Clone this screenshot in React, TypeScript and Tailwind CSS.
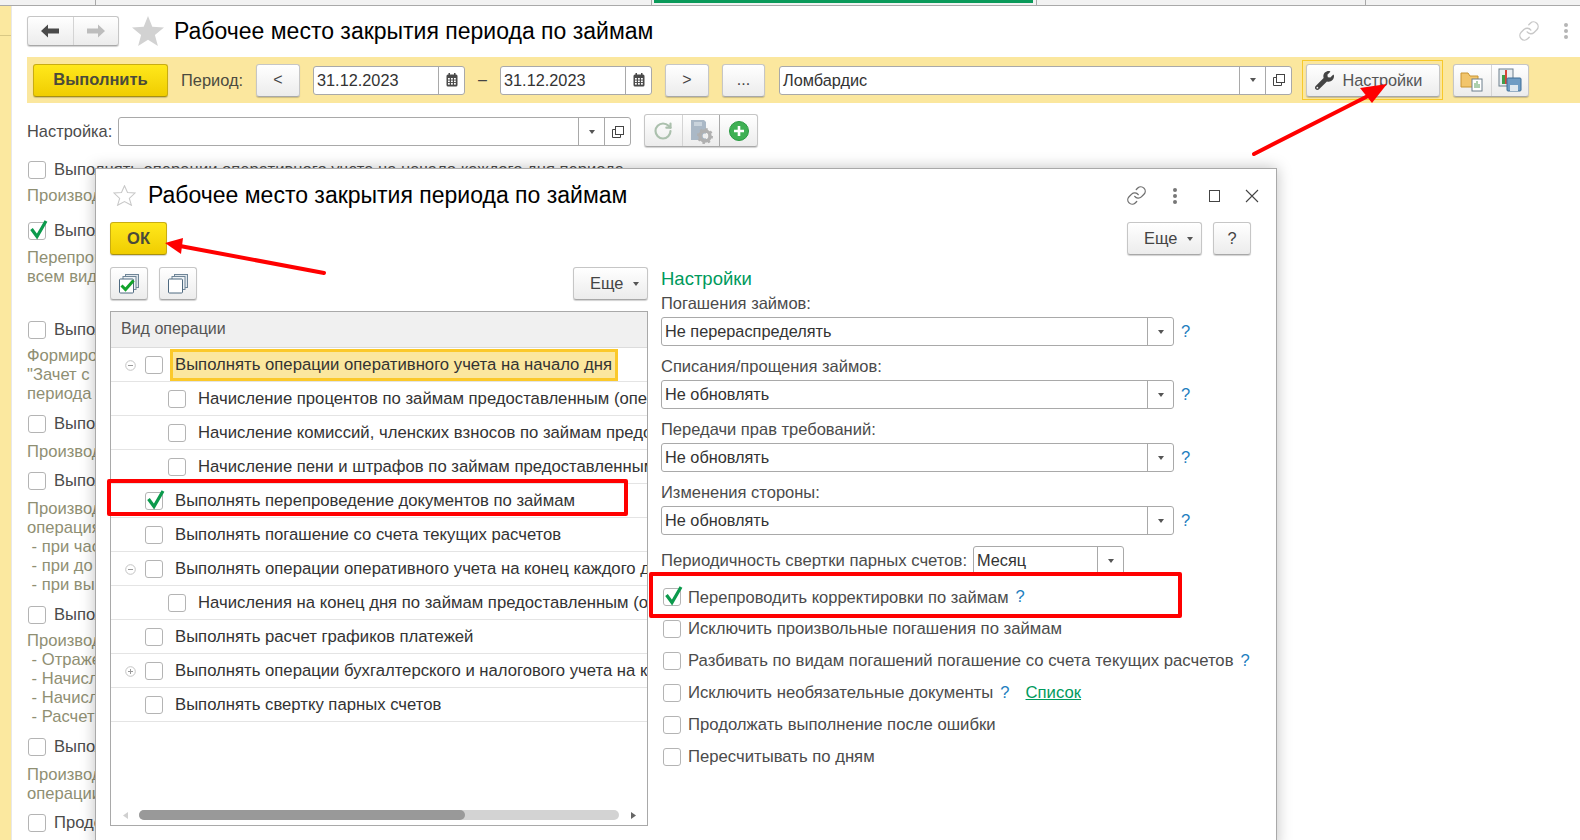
import React from "react";
import { FaWrench } from "react-icons/fa";
import { Link, RotateCw } from "lucide-react";

const btn =
  "flex items-center justify-center rounded-[3px] border border-[#c6c6c6] border-b-[#a8a8a8] bg-gradient-to-b from-white to-[#ececec] shadow-[0_1px_1px_rgba(0,0,0,0.18)] text-[#444]";
const yellowBtn =
  "flex items-center justify-center rounded-[3px] border border-[#c9ad12] border-b-[#a89010] bg-gradient-to-b from-[#ffe81a] to-[#f0cd00] shadow-[0_1px_1px_rgba(0,0,0,0.18)] text-[#4a4a3a] font-bold pb-[1px]";
const moreBtn = "justify-start pl-[16px] gap-[9px] text-[16.4px]";

function Check({ on = false }: { on?: boolean }) {
  return (
    <span className="relative block w-[18px] h-[18px] shrink-0 rounded-[3px] border border-[#b4b4b4] bg-white">
      {on && (
        <svg className="absolute left-[0px] top-[-5px]" width="20" height="22" viewBox="0 0 20 22">
          <path d="M2.5 11 L8 18.5 L17 3" fill="none" stroke="#0b9a4c" strokeWidth="3.2" />
        </svg>
      )}
    </span>
  );
}

function Arrow() {
  return (
    <svg width="8" height="6" viewBox="0 0 8 6">
      <path d="M1 1 H7 L4 5 Z" fill="#555" />
    </svg>
  );
}

function CopyIcon() {
  return (
    <svg width="14" height="14" viewBox="0 0 14 14" fill="none" stroke="#444" strokeWidth="1">
      <rect x="4.5" y="1.5" width="8" height="8" fill="white" />
      <path d="M4.5 4.5 H1.5 V12.5 H9.5 V9.5" />
    </svg>
  );
}

function Calendar() {
  return (
    <svg width="12" height="14" viewBox="0 0 12 14">
      <rect x="0.5" y="1.5" width="11" height="12" rx="1.5" fill="#4a4a4a" />
      <rect x="2.5" y="0" width="1.5" height="3" fill="#4a4a4a" />
      <rect x="8" y="0" width="1.5" height="3" fill="#4a4a4a" />
      {[5, 7.5, 10].map((y) =>
        [2, 5, 8].map((x) => <rect key={`${x}-${y}`} x={x} y={y} width="1.8" height="1.6" fill="#fff" />),
      )}
    </svg>
  );
}

function Field({
  value,
  className,
  copy = true,
}: {
  value: string;
  className: string;
  copy?: boolean;
}) {
  return (
    <div className={`flex items-stretch rounded-[3px] border border-[#a9a9a9] bg-white text-[16.3px] text-[#333] ${className}`}>
      <div className="flex-1 min-w-0 pl-[3px] flex items-center whitespace-nowrap overflow-hidden">{value}</div>
      <div className="w-[26px] border-l border-[#a9a9a9] flex items-center justify-center">
        <Arrow />
      </div>
      {copy && (
        <div className="w-[26px] border-l border-[#a9a9a9] flex items-center justify-center">
          <CopyIcon />
        </div>
      )}
    </div>
  );
}

function DateField({ value, className }: { value: string; className: string }) {
  return (
    <div className={`flex items-stretch rounded-[3px] border border-[#a9a9a9] bg-white text-[16.3px] text-[#333] h-[29px] ${className}`}>
      <div className="flex-1 pl-[3px] pt-[1px] flex items-center">{value}</div>
      <div className="w-[26px] border-l border-[#a9a9a9] flex items-center justify-center">
        <Calendar />
      </div>
    </div>
  );
}

function Q({ className = "" }: { className?: string }) {
  return <span className={`text-[#1f7fc0] text-[16.6px] ${className}`}>?</span>;
}

function BgGroup({
  checkClass,
  label,
  on,
  lines,
  linesClass,
}: {
  checkClass: string;
  label: string;
  on?: boolean;
  lines: string[];
  linesClass?: string;
}) {
  return (
    <>
      <div className={`flex items-center gap-[8px] h-[18px] text-[16.6px] text-[#4b4b4b] whitespace-nowrap ml-[1px] ${checkClass}`}>
        <Check on={on} />
        <span>{label}</span>
      </div>
      <div className={linesClass}>
        {lines.map((l, i) => (
          <div key={i} className="h-[19px] leading-[19px] text-[16.6px] text-[#8f8f73] whitespace-pre">
            {l}
          </div>
        ))}
      </div>
    </>
  );
}

const treeRows: { text: string; level: 1 | 2; on?: boolean; tree?: "-" | "+"; active?: boolean }[] = [
  { text: "Выполнять операции оперативного учета на начало дня", level: 1, tree: "-", active: true },
  { text: "Начисление процентов по займам предоставленным (опе", level: 2 },
  { text: "Начисление комиссий, членских взносов по займам предо", level: 2 },
  { text: "Начисление пени и штрафов по займам предоставленным", level: 2 },
  { text: "Выполнять перепроведение документов по займам", level: 1, on: true },
  { text: "Выполнять погашение со счета текущих расчетов", level: 1 },
  { text: "Выполнять операции оперативного учета на конец каждого д", level: 1, tree: "-" },
  { text: "Начисления на конец дня по займам предоставленным (о", level: 2 },
  { text: "Выполнять расчет графиков платежей", level: 1 },
  { text: "Выполнять операции бухгалтерского и налогового учета на к", level: 1, tree: "+" },
  { text: "Выполнять свертку парных счетов", level: 1 },
];

function TreeToggle({ kind }: { kind: "-" | "+" }) {
  return (
    <svg className="absolute left-[14px] top-[12px]" width="11" height="11" viewBox="0 0 11 11" fill="none" stroke="#9a9a9a">
      <circle cx="5.5" cy="5.5" r="4.8" stroke="#c4c4c4" />
      <path d="M3 5.5 H8" />
      {kind === "+" && <path d="M5.5 3 V8" />}
    </svg>
  );
}

function StackIcon({ on }: { on?: boolean }) {
  return (
    <svg width="22" height="20" viewBox="0 0 22 20" fill="none">
      <rect x="7.5" y="0.5" width="13" height="13" fill="#dfe6ec" stroke="#6f8597" />
      <rect x="5" y="2.5" width="13" height="13" fill="#eef2f5" stroke="#6f8597" />
      <rect x="1.5" y="5" width="14" height="14" rx="1" fill="#fff" stroke="#4f6a80" />
      {on && <path d="M3.5 11.5 L7.5 15.5 L15.5 6.5" stroke="#12a32b" strokeWidth="3" />}
    </svg>
  );
}

const labelCls = "h-[18px] leading-[18px] text-[16.5px] text-[#4b4b4b] whitespace-nowrap";

export default function App() {
  return (
    <div className="relative w-[1580px] h-[840px] overflow-hidden bg-white font-['Liberation_Sans',Arial,sans-serif]">
      <div className="flex h-[6px] bg-[#f2f2f2] border-b border-[#a9a9a9]">
        <div className="w-[96px] border-r border-[#a9a9a9]" />
        <div className="w-[556px] border-r border-[#a9a9a9]" />
        <div className="w-[385px] border-r border-[#a9a9a9] pl-[2px]">
          <div className="w-[379px] h-[3px] bg-[#0a9a5a]" />
        </div>
        <div className="w-[329px] border-r border-[#a9a9a9]" />
      </div>

      <div className="flex h-[834px]">
        <div className="w-[12px] bg-[#fbe89f] border-r border-[#e8e8e8] shrink-0">
          <div className="h-[30px] border-b border-[#d9c884]" />
        </div>

        <div className="flex-1 min-w-0 pl-[15px]">
          {/* page header */}
          <div className="flex items-center h-[30px] mt-[10px] relative">
            <div className={`${btn} w-[92px] h-[30px]`}>
              <div className="flex-1 h-full flex items-center justify-center border-r border-[#d4d4d4]">
                <svg width="20" height="14" viewBox="0 0 20 14">
                  <path d="M8 0.5 L1 7 L8 13.5 V9.5 H19 V4.5 H8 Z" fill="#4a4a4a" />
                </svg>
              </div>
              <div className="flex-1 h-full flex items-center justify-center">
                <svg width="20" height="14" viewBox="0 0 20 14">
                  <path d="M12 0.5 L19 7 L12 13.5 V9.5 H1 V4.5 H12 Z" fill="#bdbdbd" />
                </svg>
              </div>
            </div>
            <svg className="ml-[13px]" width="32" height="30" viewBox="0 0 32 30">
              <path d="M16 0 L20.3 10.8 L32 11.5 L22.9 19 L25.9 30 L16 23.8 L6.1 30 L9.1 19 L0 11.5 L11.7 10.8 Z" fill="#d2d2d2" />
            </svg>
            <div className="ml-[10px] text-[23px] text-black whitespace-nowrap">Рабочее место закрытия периода по займам</div>
            <Link className="ml-auto mr-[24px]" size={22} strokeWidth={1.5} color="#c8c8c8" />
            <div className="mr-[12px] flex flex-col gap-[2px]">
              <span className="w-[4px] h-[4px] rounded-full bg-[#b5b5b5]" />
              <span className="w-[4px] h-[4px] rounded-full bg-[#b5b5b5]" />
              <span className="w-[4px] h-[4px] rounded-full bg-[#b5b5b5]" />
            </div>
          </div>

          {/* yellow command bar */}
          <div className="flex items-center h-[46px] mt-[11px] bg-[#fbe79e] pl-[6px]">
            <div className={`${yellowBtn} w-[135px] h-[33px] text-[16.5px]`}>Выполнить</div>
            <div className="w-[75px] ml-[13px] pt-[1px] text-[16.4px] text-[#4b4b3f]">Период:</div>
            <div className={`${btn} w-[44px] h-[33px] text-[16px]`}>&lt;</div>
            <DateField value="31.12.2023" className="w-[152px] ml-[13px]" />
            <div className="w-[35px] text-center text-[16px] text-[#444]">–</div>
            <DateField value="31.12.2023" className="w-[152px]" />
            <div className={`${btn} w-[44px] h-[33px] text-[16px] ml-[13px]`}>&gt;</div>
            <div className={`${btn} w-[43px] h-[33px] text-[16px] ml-[13px]`}>...</div>
            <Field value="Ломбардис" className="w-[513px] h-[29px] ml-[14px]" />
            <div className="ml-[10px] w-[141px] h-[40px] border border-[#f7c92c] flex items-center justify-center">
              <div className={`${btn} justify-start pl-[8px] w-[134px] h-[33px] text-[16.3px] gap-[9px] text-[#555]`}>
                <FaWrench size={19} color="#444" />
                <span>Настройки</span>
              </div>
            </div>
            <div className={`${btn} w-[76px] h-[33px] ml-[10px]`}>
              <div className="flex-1 h-full flex items-center justify-center border-r border-[#d4d4d4]">
                <svg width="24" height="24" viewBox="0 0 24 24">
                  <path d="M1 5 H8 L10 8 H18 V19 H1 Z" fill="#f2c56b" stroke="#c79433" />
                  <rect x="12" y="11" width="10" height="12" fill="#fff" stroke="#6d7f8c" />
                  <path d="M15 20 V15 M17 20 V13 M19 20 V16" stroke="#5aa05a" />
                </svg>
              </div>
              <div className="flex-1 h-full flex items-center justify-center">
                <svg width="24" height="24" viewBox="0 0 24 24">
                  <rect x="1" y="1" width="14" height="17" fill="#e9eef2" stroke="#6d7f8c" />
                  <rect x="4" y="7" width="3" height="9" fill="#3f9d4b" />
                  <rect x="7" y="2" width="2" height="14" fill="#d8443a" />
                  <rect x="9" y="10" width="14" height="13" rx="1" fill="#6f9cc4" stroke="#3f6f98" />
                  <rect x="12" y="17" width="8" height="6" fill="#dfe8ef" />
                </svg>
              </div>
            </div>
          </div>

          {/* setting row */}
          <div className="flex items-center h-[33px] mt-[11px]">
            <div className="w-[91px] pt-[2px] text-[16.4px] text-[#4b4b4b] whitespace-nowrap">Настройка:</div>
            <Field value="" className="w-[513px] h-[29px] mt-[2px]" />
            <div className={`${btn} w-[114px] h-[33px] ml-[13px]`}>
              <div className="flex-1 h-full flex items-center justify-center border-r border-[#d4d4d4]">
                <RotateCw size={20} strokeWidth={2.6} color="#abc0ad" />
              </div>
              <div className="flex-1 h-full flex items-center justify-center border-r border-[#a9a9a9]">
                <svg width="26" height="26" viewBox="0 0 26 26">
                  <path d="M3 2 H16 L18 4 V22 H3 Z" fill="#aab8c6" />
                  <rect x="6" y="4" width="8" height="4" fill="#c9d3dc" />
                  <circle cx="17" cy="18" r="5" fill="none" stroke="#b0b0b0" strokeWidth="3.5" />
                  <circle cx="17" cy="18" r="7" fill="none" stroke="#b0b0b0" strokeWidth="2" strokeDasharray="2.5 3" />
                  <circle cx="17" cy="18" r="2.4" fill="#eee" />
                </svg>
              </div>
              <div className="flex-1 h-full flex items-center justify-center">
                <svg width="20" height="20" viewBox="0 0 20 20">
                  <circle cx="10" cy="10" r="9.5" fill="#3fb054" stroke="#2a9a42" />
                  <path d="M10 5 V15 M5 10 H15" stroke="#fff" strokeWidth="2.6" />
                </svg>
              </div>
            </div>
          </div>

          {/* background list */}
          <BgGroup
            checkClass="mt-[14px]"
            label="Выполнять операции оперативного учета на начало каждого дня периода"
            lines={["Производить"]}
            linesClass="mt-[7px]"
          />
          <BgGroup checkClass="mt-[17px]" label="Выполнять" on lines={["Перепроводить", "всем видам"]} linesClass="mt-[8px]" />
          <BgGroup checkClass="mt-[35px]" label="Выполнять" lines={["Формировать", '"Зачет с', "периода"]} linesClass="mt-[7px]" />
          <BgGroup checkClass="mt-[12px]" label="Выполнять" lines={["Производить"]} linesClass="mt-[9px]" />
          <BgGroup
            checkClass="mt-[11px]"
            label="Выполнять"
            lines={["Производить", "операция", " - при частичном", " - при до", " - при вы"]}
            linesClass="mt-[9px]"
          />
          <BgGroup
            checkClass="mt-[12px]"
            label="Выполнять"
            lines={["Производить", " - Отражение", " - Начисление", " - Начисление", " - Расчет"]}
            linesClass="mt-[7px]"
          />
          <BgGroup checkClass="mt-[12px]" label="Выполнять" lines={["Производить", "операции"]} linesClass="mt-[9px]" />
          <BgGroup checkClass="mt-[11px]" label="Продолжать" lines={[]} />
        </div>
      </div>

      {/* dialog */}
      <div className="absolute left-[95px] top-[168px] w-[1182px] h-[680px] bg-white border border-[#a9a9a9] shadow-[0_0_14px_rgba(0,0,0,0.25)] pl-[14px] pr-[25px]">
        <div className="flex items-center h-[53px] -mr-[9px]">
          <svg className="ml-[3px]" width="23" height="21" viewBox="0 0 32 30" fill="#fff" stroke="#c8c8c8" strokeWidth="1.5">
            <path d="M16 1 L20.3 10.8 L31 11.5 L22.9 19 L25.9 29 L16 23.8 L6.1 29 L9.1 19 L1 11.5 L11.7 10.8 Z" />
          </svg>
          <div className="ml-[12px] text-[23px] text-black whitespace-nowrap">Рабочее место закрытия периода по займам</div>
          <Link className="ml-auto" size={21} strokeWidth={1.5} color="#6f6f6f" />
          <div className="ml-[26px] flex flex-col gap-[2px]">
            <span className="w-[4px] h-[4px] rounded-full bg-[#777]" />
            <span className="w-[4px] h-[4px] rounded-full bg-[#777]" />
            <span className="w-[4px] h-[4px] rounded-full bg-[#777]" />
          </div>
          <div className="ml-[32px] w-[11px] h-[12px] border border-[#444]" />
          <svg className="ml-[25px]" width="14" height="14" viewBox="0 0 14 14" stroke="#444" strokeWidth="1.1">
            <path d="M1 1 L13 13 M13 1 L1 13" />
          </svg>
          <div className="w-[1px]" />
        </div>

        <div className="flex items-center h-[33px]">
          <div className={`${yellowBtn} w-[57px] h-[33px] text-[16.5px]`}>ОК</div>
          <div className={`${btn} ${moreBtn} w-[75px] h-[33px] ml-auto`}>
            <span>Еще</span>
            <Arrow />
          </div>
          <div className={`${btn} w-[38px] h-[33px] text-[16.4px] ml-[11px]`}>?</div>
        </div>

        <div className="flex mt-[12px]">
          <div className="w-[538px] shrink-0">
            <div className="flex items-center h-[33px]">
              <div className={`${btn} w-[38px] h-[33px]`}>
                <StackIcon on />
              </div>
              <div className={`${btn} w-[38px] h-[33px] ml-[11px]`}>
                <StackIcon />
              </div>
              <div className={`${btn} ${moreBtn} w-[75px] h-[33px] ml-auto`}>
                <span>Еще</span>
                <Arrow />
              </div>
            </div>
            <div className="mt-[11px] h-[515px] border border-[#a9a9a9] flex flex-col overflow-hidden">
              <div className="h-[36px] shrink-0 bg-[#f0f0f0] border-b border-[#dcdcdc] flex items-center pl-[10px] pb-[2px] text-[16px] text-[#555]">
                Вид операции
              </div>
              <div className="flex-1 min-h-0">
                {treeRows.map((r) => (
                  <div
                    key={r.text}
                    className={`relative h-[34px] border-b border-[#e4e4e4] flex items-center whitespace-nowrap text-[16.7px] text-[#333] ${
                      r.level === 1 ? "pl-[34px]" : "pl-[57px]"
                    }`}
                  >
                    {r.tree && <TreeToggle kind={r.tree} />}
                    <Check on={r.on} />
                    {r.active ? (
                      <span className="ml-[7px] pl-[2px] pr-[3px] h-[32px] flex items-center bg-[#fbe79e] border-[3px] border-[#fbc92a]">{r.text}</span>
                    ) : (
                      <span className="ml-[12px] min-w-0 overflow-hidden">{r.text}</span>
                    )}
                  </div>
                ))}
              </div>
              <div className="h-[24px] shrink-0 pt-[9px] flex items-start">
                <svg className="ml-[12px] mt-[2px]" width="6" height="7" viewBox="0 0 6 7">
                  <path d="M5 0 V7 L0 3.5 Z" fill="#d0d0d0" />
                </svg>
                <div className="ml-[10px] w-[480px] h-[10px] rounded-full bg-[#d3d3d3]">
                  <div className="w-[326px] h-[10px] rounded-full bg-[#999]" />
                </div>
                <svg className="ml-[11px] mt-[2px]" width="6" height="7" viewBox="0 0 6 7">
                  <path d="M1 0 V7 L6 3.5 Z" fill="#666" />
                </svg>
              </div>
            </div>
          </div>

          <div className="ml-[13px] flex-1 min-w-0">
            <div className="h-[24px] leading-[24px] text-[18.5px] text-[#009a5c]">Настройки</div>
            <div className={`mt-[3px] ${labelCls}`}>Погашения займов:</div>
            <div className="mt-[5px] flex items-center">
              <Field value="Не перераспределять" copy={false} className="w-[513px] h-[29px]" />
              <Q className="ml-[7px] pt-[1px]" />
            </div>
            <div className={`mt-[11px] ${labelCls}`}>Списания/прощения займов:</div>
            <div className="mt-[5px] flex items-center">
              <Field value="Не обновлять" copy={false} className="w-[513px] h-[29px]" />
              <Q className="ml-[7px] pt-[1px]" />
            </div>
            <div className={`mt-[11px] ${labelCls}`}>Передачи прав требований:</div>
            <div className="mt-[5px] flex items-center">
              <Field value="Не обновлять" copy={false} className="w-[513px] h-[29px]" />
              <Q className="ml-[7px] pt-[1px]" />
            </div>
            <div className={`mt-[11px] ${labelCls}`}>Изменения стороны:</div>
            <div className="mt-[5px] flex items-center">
              <Field value="Не обновлять" copy={false} className="w-[513px] h-[29px]" />
              <Q className="ml-[7px] pt-[1px]" />
            </div>
            <div className="mt-[11px] flex items-center text-[16.7px] text-[#4b4b4b]">
              <span className="w-[312px] whitespace-nowrap">Периодичность свертки парных счетов:</span>
              <Field value="Месяц" copy={false} className="w-[151px] h-[29px]" />
            </div>
            <div className="mt-[6px] text-[16.7px] text-[#4b4b4b]">
              <div className="h-[32px] flex items-center gap-[7px] pl-[2px]">
                <Check on />
                <span className="text-[16.5px]">Перепроводить корректировки по займам</span>
                <Q />
              </div>
              <div className="h-[32px] flex items-center gap-[7px] pl-[2px]">
                <Check />
                <span>Исключить произвольные погашения по займам</span>
              </div>
              <div className="h-[32px] flex items-center gap-[7px] pl-[2px]">
                <Check />
                <span>Разбивать по видам погашений погашение со счета текущих расчетов</span>
                <Q />
              </div>
              <div className="h-[32px] flex items-center gap-[7px] pl-[2px]">
                <Check />
                <span>Исключить необязательные документы</span>
                <Q />
                <span className="ml-[9px] text-[#009a5c] underline">Список</span>
              </div>
              <div className="h-[32px] flex items-center gap-[7px] pl-[2px]">
                <Check />
                <span>Продолжать выполнение после ошибки</span>
              </div>
              <div className="h-[32px] flex items-center gap-[7px] pl-[2px]">
                <Check />
                <span>Пересчитывать по дням</span>
              </div>
            </div>
          </div>
        </div>
      </div>

      {/* annotation overlays */}
      <div className="absolute left-[107px] top-[479px] w-[521px] h-[37px] border-4 border-[#ff0000] rounded-[2px]" />
      <div className="absolute left-[649px] top-[572px] w-[533px] h-[46px] border-4 border-[#ff0000] rounded-[2px]" />
      <svg className="absolute left-0 top-0 pointer-events-none" width="1580" height="840" viewBox="0 0 1580 840">
        <path d="M1254 154 L1368 96" stroke="#ff0000" strokeWidth="4" strokeLinecap="round" />
        <path d="M1387 84 L1360 88 L1372 103 Z" fill="#ff0000" />
        <path d="M324 273 L180 246" stroke="#ff0000" strokeWidth="4" strokeLinecap="round" />
        <path d="M165 243 L183 238 L181 254 Z" fill="#ff0000" />
      </svg>
    </div>
  );
}
